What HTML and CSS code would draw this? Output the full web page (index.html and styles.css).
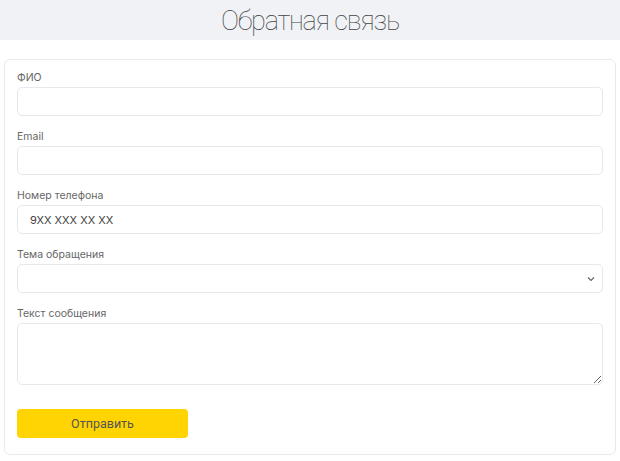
FILE: index.html
```
<!DOCTYPE html>
<html lang="ru">
<head>
<meta charset="utf-8">
<link rel="stylesheet" href="styles.css">
</head>
<body>
<header class="head"><h1 class="title">Обратная связь</h1></header>
<form class="card">
  <div class="field">
    <label class="label">ФИО</label>
    <input class="input" type="text">
  </div>
  <div class="field">
    <label class="label">Email</label>
    <input class="input" type="text">
  </div>
  <div class="field">
    <label class="label">Номер телефона</label>
    <input class="input" type="text" placeholder="9XX XXX XX XX">
  </div>
  <div class="field">
    <label class="label">Тема обращения</label>
    <div class="select-wrap">
      <select class="input select"><option></option></select>
      <svg class="chev" width="8" height="6" viewBox="0 0 8 6"><path d="M1 1.5 L4 4.5 L7 1.5" fill="none" stroke="#666" stroke-width="1.2"/></svg>
    </div>
  </div>
  <div class="field">
    <label class="label">Текст сообщения</label>
    <textarea class="input area"></textarea>
  </div>
  <button class="btn" type="button">Отправить</button>
</form>
</body>
</html>
```
FILE: styles.css
```
* { box-sizing: border-box; }
body { margin: 0; background: #fff; font-family: Inter, "Noto Sans", sans-serif; color: #555; }
.head { height: 40px; background: #f0f2f6; display: flex; align-items: center; justify-content: center; }
.title { margin: 0; font-family: Roboto, sans-serif; font-weight: 100; font-size: 27px; color: #444; line-height: 40px; letter-spacing: -1.2px; padding-top: 1px; }
.card { margin: 19px 4px 0; border: 1px solid #e8e9ec; border-radius: 6px; padding: 8px 12px 16px; display: flex; flex-direction: column; }
.field { display: flex; flex-direction: column; margin-bottom: 11px; }
.label { font-size: 10.5px; line-height: 16px; color: #666; padding-top: 2px; margin-bottom: 1px; }
.input { height: 29px; width: 100%; border: 1px solid #e6e8eb; border-radius: 5px; background: #fff; padding: 0 12px; font-family: Inter, "Noto Sans", sans-serif; font-size: 11px; color: #333; outline: none; }
.input::placeholder { color: #444; }
.select-wrap { position: relative; }
.select { appearance: none; -webkit-appearance: none; }
.chev { position: absolute; right: 8px; top: 12px; }
.area { height: 62px; padding: 8px 12px; resize: vertical; }
.btn { margin-top: 13px; width: 171px; height: 29px; border: none; border-radius: 4px; background: #ffd400; color: #555; font-family: Roboto, sans-serif; font-size: 12.5px; cursor: pointer; }
```
